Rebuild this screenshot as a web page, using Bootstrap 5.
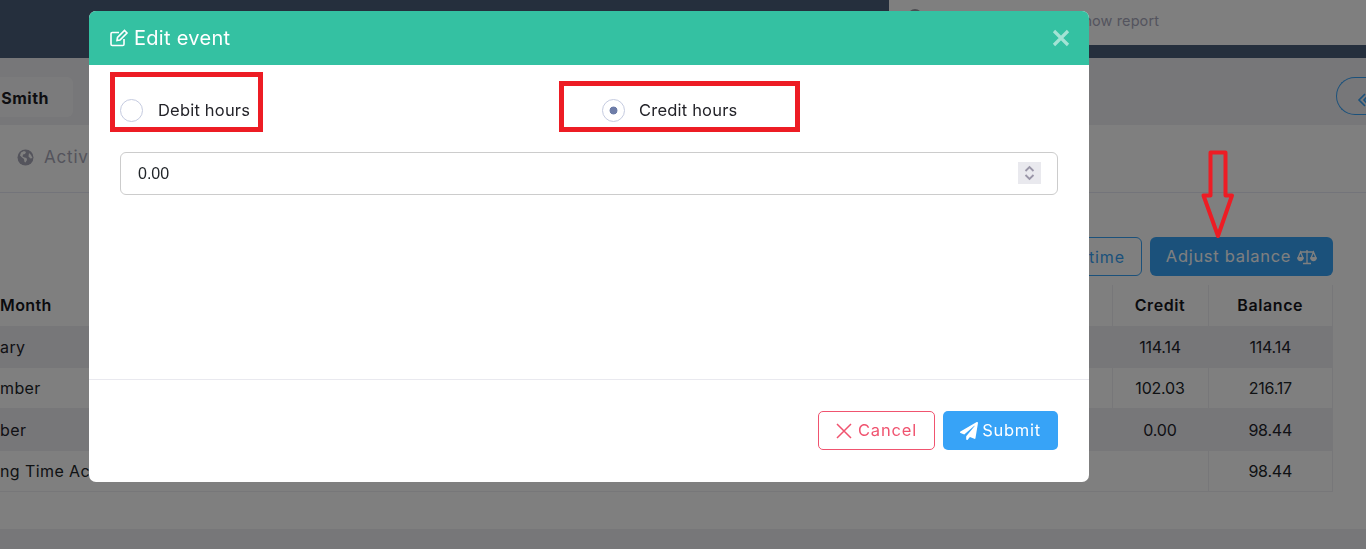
<!DOCTYPE html>
<html lang="en">
<head>
<meta charset="utf-8">
<title>Edit event</title>
<link href="https://cdn.jsdelivr.net/npm/bootstrap@5.3.0/dist/css/bootstrap.min.css" rel="stylesheet">
<style>
html,body{height:100%;overflow:hidden}
body{font-family:Inter,"Liberation Sans",sans-serif;font-size:16px;color:#23232b;background:#eeeef3;letter-spacing:.15px}
.page-wrap{width:1366px}
.top-bar{height:58px;background:#4a5f7b}
.top-left{width:889px}
.top-right{width:477px}
.top-right-in{height:45px;background:#fff;color:#a8a8bc;padding:10px 0 0 185px;position:relative;letter-spacing:.1px;font-size:14.500px}
.top-dot{position:absolute;left:19px;top:9px;width:14px;height:14px;border-radius:50%;background:#9a9aa4}
.sub-bar{height:67px;padding-top:19px}
.name-pill{width:73px;height:40px;background:#f7f7f9;border-radius:0 6px 6px 0;font-weight:700;color:#1d1d24;text-align:right;padding:9px 24px 0 0;letter-spacing:.5px}
.back-pill{width:40px;height:38px;border:1px solid #37a3f7;border-right:0;border-radius:19px 0 0 19px;margin-right:-10px;color:#37a3f7;padding:8px 0 0 19px;background:#eeeef3;overflow:hidden}
.main-card{height:404px;background:#fff;border:0;border-radius:0}
.tab-row{height:68px;border-bottom:1px solid #e7e9f4;padding:20px 0 0 17px;color:#a8a8b8;font-size:17px;letter-spacing:.8px}
.tab-row svg{margin-right:2px}
.tool-row{height:45px;margin-top:44px;padding-right:33px}
.btn-time{height:39px;width:280px;border:1px solid #37a3f7;color:#37a3f7;border-radius:6px;text-align:right;padding:7px 16px 0 0;background:#fff;letter-spacing:.9px}
.btn-balance{height:39px;width:183px;background:#37a3f7;color:#fff;border-radius:6px;padding:0;display:flex;align-items:center;justify-content:center;gap:6px;margin-left:8px;border:0;font-size:16.500px;letter-spacing:.7px}
.btn-balance:hover{background:#37a3f7;color:#fff}
.data-table{width:1333px;table-layout:fixed;margin:3px 0 0;border-color:#eeeef3;--bs-table-striped-bg:#eeeef3;--bs-table-striped-color:#23232b}
.data-table th,.data-table td{height:41.300px;padding:0;vertical-align:middle;border-width:0 0 1px 1px;border-color:#eeeef3;border-style:solid;font-weight:400;letter-spacing:-.2px}
.data-table th:last-child,.data-table td:last-child{border-right-width:1px}
.data-table th{font-weight:600;color:#16161c;letter-spacing:.6px}
.col-month{width:700px}
.col-mid{width:412px}
.col-credit{width:96px}
.data-table .cell-first{border-left:0;letter-spacing:.4px}
.data-table .cell-mid{border-left:0}
.modal-dialog.edit-dialog{max-width:1000px;width:1000px;margin:11px 0 0 89px}
.edit-dialog .modal-content{height:471px;border:0;border-radius:7px;overflow:visible}
.edit-head{height:54px;background:#34c1a2;color:#fff;padding:0 19px 0 20px;border:0;border-radius:7px 7px 0 0}
.edit-title{font-size:20px;font-weight:400;margin:0;display:flex;align-items:center;gap:5px;letter-spacing:.3px}
.edit-x{width:18px;height:18px;opacity:.55}
.edit-body{height:314px;padding:33px 31px 0;flex:none}
.radio-line{display:flex;align-items:center;height:24px;color:#232329;font-size:16.500px;letter-spacing:.2px}
.radio-line .form-check-input{width:23px;height:23px;margin:0;border:1px solid #c5cbe0;background-color:#fff;background-image:none;flex:none}
.radio-line .form-check-input:checked{background-color:#fff;border-color:#c5cbe0;background-image:radial-gradient(circle,#6e7da8 0,#6e7da8 3.600px,transparent 4.300px)}
.radio-a label{margin-left:15px}
.radio-b{padding-left:13px}
.radio-b label{margin-left:14px}
.num-wrap{position:relative;margin-top:30px}
.num-input{height:43px;border:1px solid #ccc;border-radius:6px;padding:0 17px;font-family:"Liberation Sans",Arial,sans-serif;font-size:16px;color:#212529;letter-spacing:0}
.spin{position:absolute;right:17px;top:10px;width:23px;height:22px;background:#e9e9ee;display:block}
.edit-foot{height:103px;padding:31px 31px 0;border-top:1px solid #e9e9ef;flex:none;display:flex;justify-content:flex-end;align-items:flex-start;gap:8px}
.edit-foot>*{margin:0}
.btn-cancel{width:117px;height:39px;border:1px solid #f0536f;color:#f0536f;background:#fff;border-radius:5px;padding:0;display:flex;align-items:center;justify-content:center;gap:6px;font-size:16.500px;letter-spacing:.85px}
.btn-send{width:115px;height:39px;background:#37a3f7;color:#fff;border:0;border-radius:5px;padding:0;display:flex;align-items:center;justify-content:center;gap:4px;font-size:16.500px;letter-spacing:.7px}
.mark-box{position:absolute;border:5px solid #ed1c24;pointer-events:none}
.mark-a{left:21px;top:61px;width:153px;height:60px}
.mark-b{left:470px;top:70px;width:241px;height:51px}
.mark-arrow{position:fixed;left:1196px;top:146px;z-index:1060;width:44px;height:96px}
</style>
</head>
<body>
<div class="page-wrap">
  <div class="top-bar d-flex">
    <div class="top-left"></div>
    <div class="top-right"><div class="top-right-in"><span class="top-dot"></span>Show report</div></div>
  </div>
  <div class="sub-bar d-flex justify-content-between">
    <div class="name-pill">Smith</div>
    <div class="back-pill">
      <svg width="18" height="18" viewBox="0 0 18 18" fill="none" stroke="currentColor" stroke-width="1.600"><path d="M9 3 3 9l6 6M14 3 8 9l6 6"/></svg>
    </div>
  </div>
  <div class="card main-card">
    <div class="tab-row d-flex align-items-start gap-2">
      <svg class="mt-1" width="17" height="17" viewBox="0 0 17 17"><circle cx="8.500" cy="8.500" r="8" fill="#a8a8b8"/><path d="M4 3.500l3-1.500 2 1-1 2-2 .5-.5 2 2 1 2 .5.5 2-1.500 2.500-1-.5-.5-3-2-1.500-2-2zM12 4l2 2 1.500 3-2 .5-2-2z" fill="#fff"/></svg>
      <span>Activity</span>
    </div>
    <div class="tool-row d-flex justify-content-end">
      <div class="btn-time">time</div>
      <button type="button" class="btn btn-balance">Adjust balance
        <svg width="20" height="16" viewBox="0 0 20 16" fill="none" stroke="#fff" stroke-width="1.300"><path d="M10 1v13M6 14.500h8M3.500 3h13"/><path d="M3.500 3 1 9h5zM16.500 3 14 9h5z"/><path d="M1 9a2.500 2.500 0 0 0 5 0zM14 9a2.500 2.500 0 0 0 5 0z" fill="#fff"/></svg>
      </button>
    </div>
    <table class="table table-striped data-table text-center">
      <colgroup><col class="col-month"><col class="col-mid"><col class="col-credit"><col></colgroup>
      <thead>
        <tr><th class="cell-first text-start">Month</th><th class="cell-mid"></th><th>Credit</th><th>Balance</th></tr>
      </thead>
      <tbody>
        <tr><td class="cell-first text-start">ary</td><td class="cell-mid"></td><td>114.14</td><td>114.14</td></tr>
        <tr><td class="cell-first text-start">mber</td><td class="cell-mid"></td><td>102.03</td><td>216.17</td></tr>
        <tr><td class="cell-first text-start">ber</td><td class="cell-mid"></td><td>0.00</td><td>98.44</td></tr>
        <tr><td class="cell-first text-start">ng Time Account</td><td class="cell-mid" colspan="2"></td><td>98.44</td></tr>
      </tbody>
    </table>
  </div>
</div>

<div class="modal-backdrop fade show"></div>
<div class="modal d-block" tabindex="-1">
  <div class="modal-dialog edit-dialog">
    <div class="modal-content">
      <div class="modal-header edit-head">
        <h5 class="edit-title">
          <svg width="20" height="20" viewBox="0 0 20 20" fill="none" stroke="#fff" stroke-width="1.600"><path d="M15 11v5.200a1.300 1.300 0 0 1-1.300 1.300H3.300A1.300 1.300 0 0 1 2 16.200V5.800a1.300 1.300 0 0 1 1.300-1.300H10"/><path d="M8 12.500l.5-3L15.500 2.500l2.500 2.500-7 7z"/></svg>
          Edit event
        </h5>
        <svg class="edit-x" viewBox="0 0 18 18" fill="none" stroke="#fff" stroke-width="3.200"><path d="M2 2l14 14M16 2 2 16"/></svg>
      </div>
      <div class="modal-body edit-body">
        <div class="row g-0">
          <div class="col-6"><div class="radio-line radio-a">
            <input class="form-check-input" type="radio" name="hours" id="debit"><label for="debit">Debit hours</label>
          </div></div>
          <div class="col-6"><div class="radio-line radio-b">
            <input class="form-check-input" type="radio" name="hours" id="credit" checked><label for="credit">Credit hours</label>
          </div></div>
        </div>
        <div class="num-wrap">
          <input class="form-control num-input" type="text" value="0.00" aria-label="Hours">
          <svg class="spin" viewBox="0 0 23 22" fill="none" stroke="#9a96a8" stroke-width="1.800"><path d="M7.500 9 11.500 5l4 4M7.500 13l4 4 4-4"/></svg>
        </div>
      </div>
      <div class="modal-footer edit-foot">
        <button type="button" class="btn btn-cancel">
          <svg width="16" height="16" viewBox="0 0 16 16" fill="none" stroke="currentColor" stroke-width="1.500"><path d="M1 1l14 14M15 1 1 15"/></svg>
          Cancel
        </button>
        <button type="button" class="btn btn-send">
          <svg width="18" height="18" viewBox="0 0 512 512" fill="#fff"><path d="M476 3.200 12.500 270.600c-18.100 10.400-15.800 35.600 2.200 43.200L121 358.400l287.300-253.200c5.500-4.900 13.300 2.600 8.600 8.300L176 407v80.500c0 23.600 28.500 32.900 42.500 15.800L282 426l124.600 52.200c14.200 6 30.400-2.900 33-18.200l72-432C515 7.800 493.300-6.800 476 3.200z"/></svg>
          Submit
        </button>
      </div>
      <div class="mark-box mark-a"></div>
      <div class="mark-box mark-b"></div>
    </div>
  </div>
</div>
<svg class="mark-arrow" viewBox="0 0 44 96" fill="none" stroke="#ed1c24" stroke-width="4" stroke-linejoin="round"><path d="M14.500 6.500h15V49.500h6.500L22 90 7.500 49.500h7z"/></svg>
<script src="https://cdn.jsdelivr.net/npm/bootstrap@5.3.0/dist/js/bootstrap.bundle.min.js"></script>
</body>
</html>
